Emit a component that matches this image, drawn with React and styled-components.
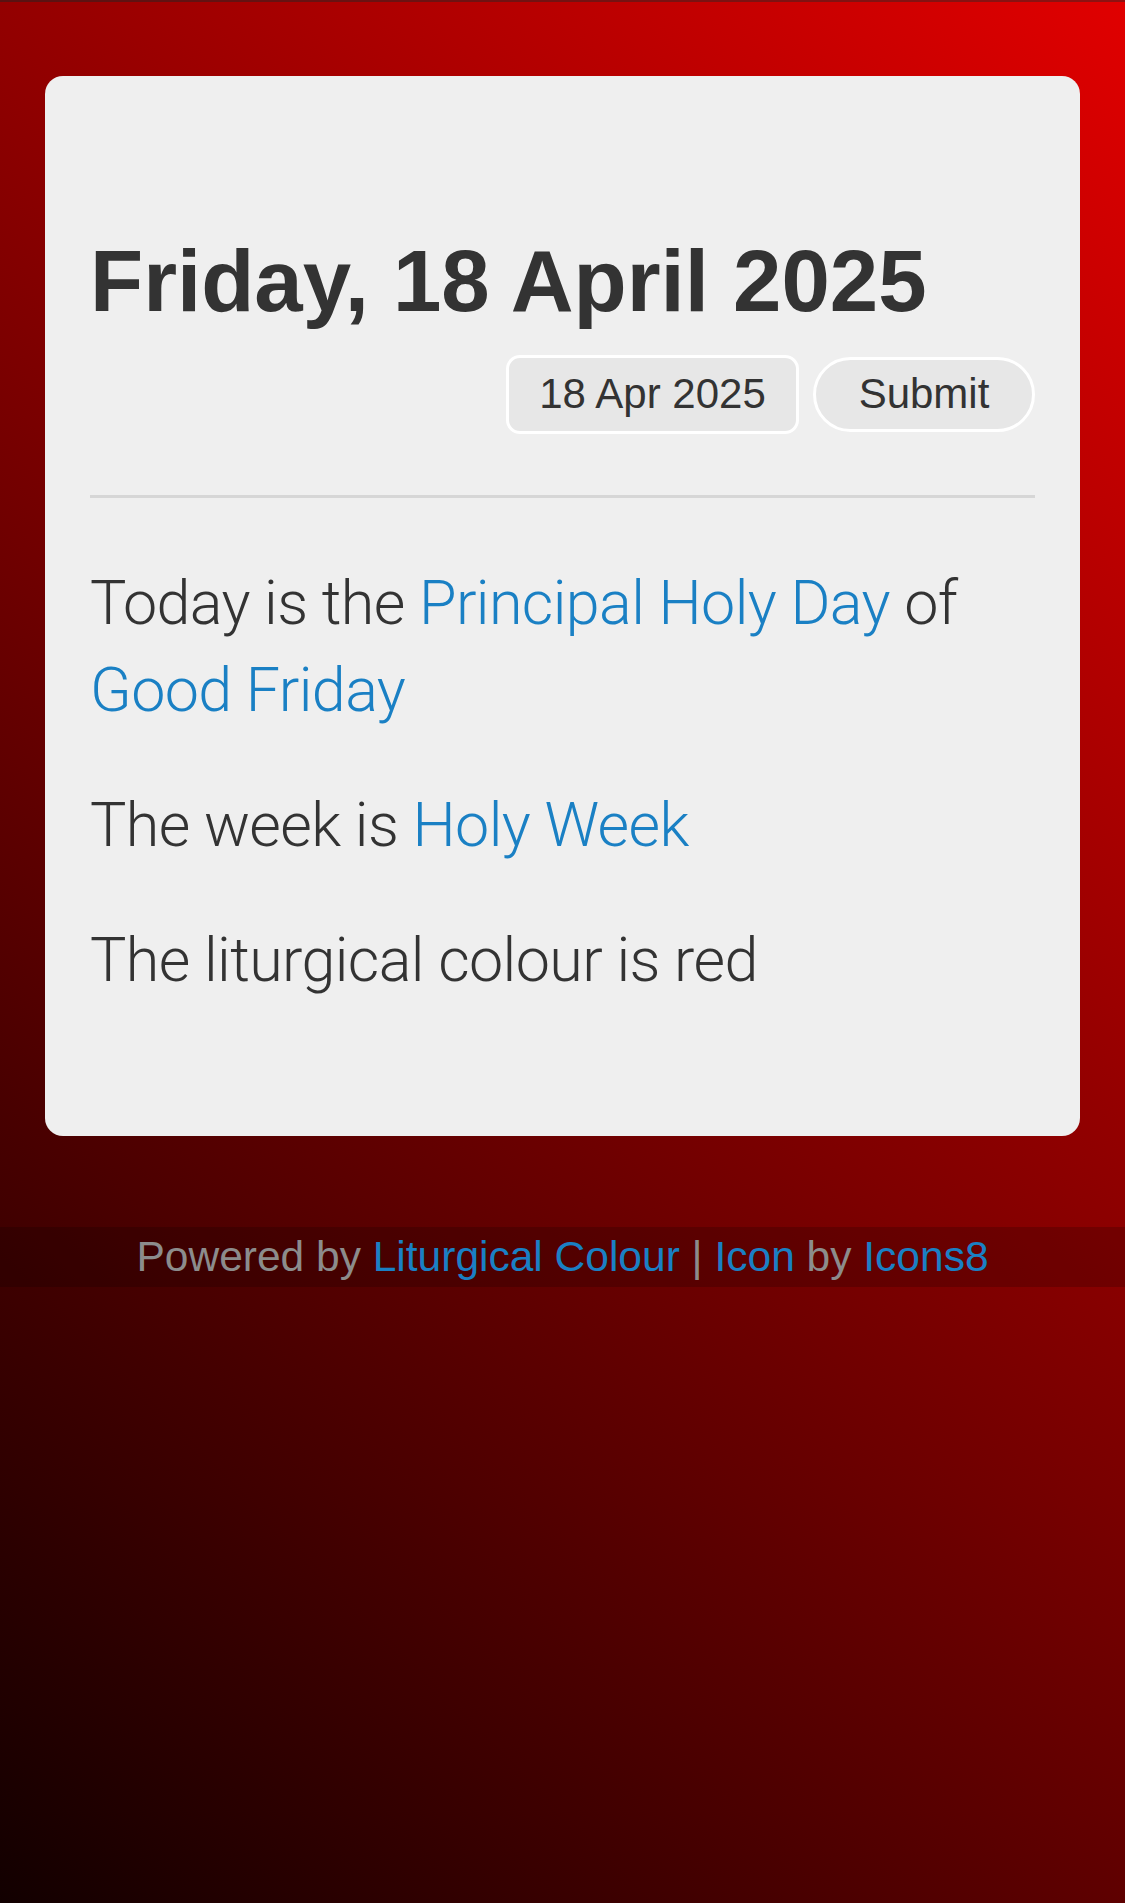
import React from 'react';
import styled, { createGlobalStyle } from 'styled-components';

// STYLES
const GlobalStyle = createGlobalStyle`
  html, body { margin: 0; padding: 0; }
  body { font-family: "Liberation Sans", Arial, sans-serif; }
`;

const PageDiv = styled.div`
  min-height: 100vh;
  box-sizing: border-box;
  border-top: 2px solid rgba(255, 60, 60, 0.3);
  background: linear-gradient(45deg, #120000 0%, #e00000 100%);
  padding-top: 74px;
  display: flex;
  flex-direction: column;
`;

const CardDiv = styled.div`
  margin: 0 45px;
  padding: 45px 45px 132px 45px;
  background: #efefef;
  border-radius: 18px;
`;

const TitleH1 = styled.h1`
  margin: 112px 0 0 0;
  font-size: 87px;
  line-height: 1.1;
  font-weight: 700;
  color: #333;
  letter-spacing: 0;
`;

const DateForm = styled.form`
  display: flex;
  justify-content: flex-end;
  align-items: center;
  gap: 14px;
  margin-top: 26px;
`;

const DateInput = styled.input`
  box-sizing: border-box;
  width: 293px;
  height: 79px;
  border: 3px solid #fff;
  border-radius: 14px;
  background: #e7e7e7;
  font-family: "Liberation Sans", Arial, sans-serif;
  font-size: 42px;
  color: #333;
  text-align: center;
  padding: 0;
  outline: none;
`;

const SubmitButton = styled.button`
  box-sizing: border-box;
  width: 222px;
  height: 75px;
  border: 3px solid #fff;
  border-radius: 40px;
  background: #e7e7e7;
  font-family: "Liberation Sans", Arial, sans-serif;
  font-size: 42px;
  color: #333;
  padding: 0;
  cursor: pointer;
`;

const Rule = styled.hr`
  margin: 61px 0 0 0;
  border: none;
  border-top: 3px solid #d6d6d6;
`;

const InfoP = styled.p`
  margin: ${p => (p.$first ? '62px' : '48px')} 0 0 0;
  font-family: Roboto, "Liberation Sans", sans-serif;
  font-weight: 300;
  font-size: 61px;
  line-height: 87px;
  color: #333;
  letter-spacing: -0.6px;
`;

const BlueLink = styled.a`
  color: #1a80c4;
  text-decoration: none;
`;

const FooterDiv = styled.footer`
  margin-top: 91px;
  height: 60px;
  background: rgba(0, 0, 0, 0.18);
  text-align: center;
  font-size: 42.5px;
  line-height: 60px;
  color: #8c8c8c;
  white-space: nowrap;
`;

export default function App() {
  return (
    <PageDiv>
      <GlobalStyle />

      <CardDiv>
        <TitleH1>Friday, 18 April 2025</TitleH1>

        <DateForm onSubmit={e => e.preventDefault()}>
          <DateInput type="text" defaultValue="18 Apr 2025" />
          <SubmitButton type="submit">Submit</SubmitButton>
        </DateForm>

        <Rule />

        <InfoP $first>
          Today is the <BlueLink href="#">Principal Holy Day</BlueLink> of{' '}
          <BlueLink href="#">Good Friday</BlueLink>
        </InfoP>
        <InfoP>
          The week is <BlueLink href="#">Holy Week</BlueLink>
        </InfoP>
        <InfoP>The liturgical colour is red</InfoP>
      </CardDiv>

      <FooterDiv>
        Powered by <BlueLink href="#">Liturgical Colour</BlueLink> | <BlueLink href="#">Icon</BlueLink> by{' '}
        <BlueLink href="#">Icons8</BlueLink>
      </FooterDiv>
    </PageDiv>
  );
}
